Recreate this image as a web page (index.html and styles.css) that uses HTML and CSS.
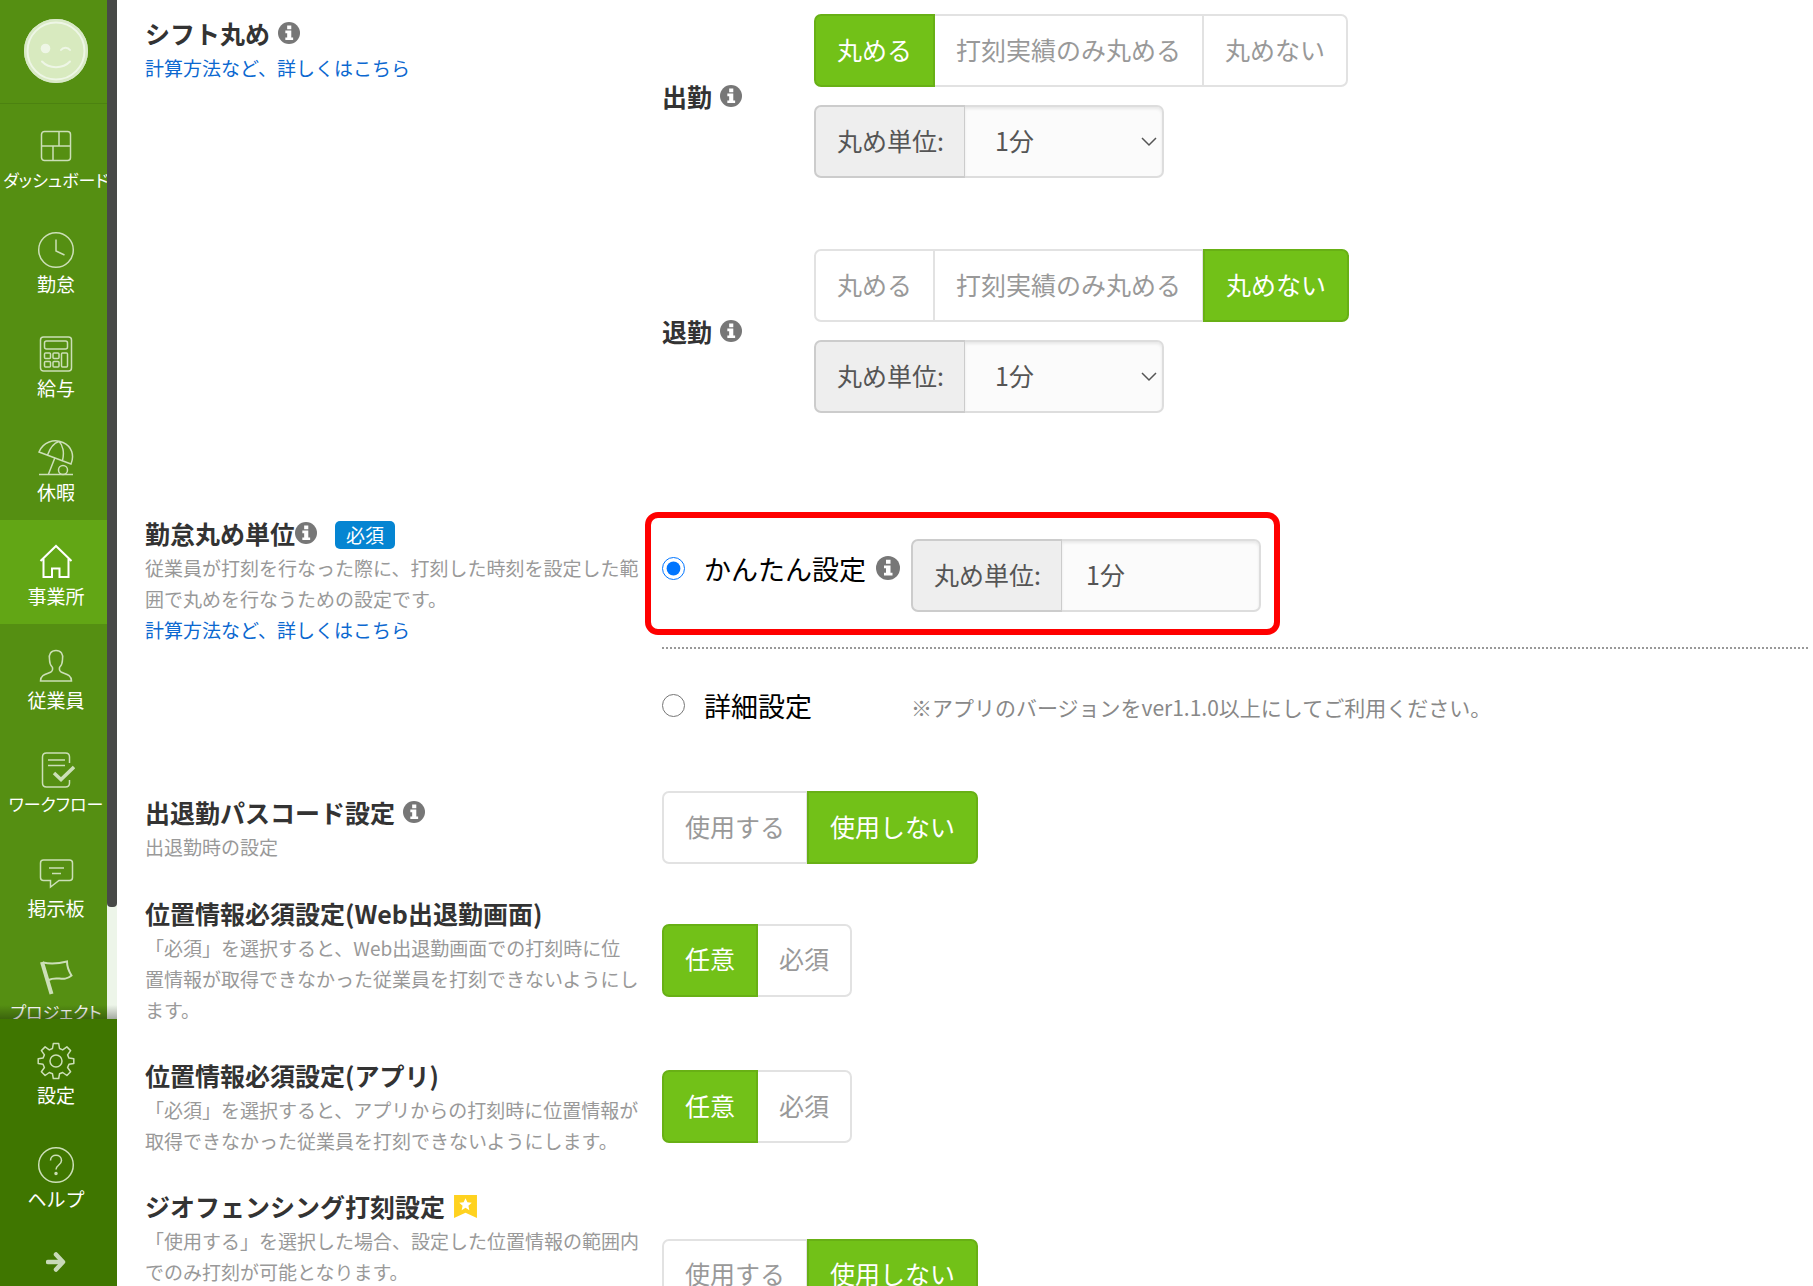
FILE: index.html
```html
<!DOCTYPE html>
<html lang="ja">
<head>
    <meta charset="UTF-8">
    <meta name="viewport" content="width=device-width, initial-scale=1.0">
    <title>事業所設定</title>
    <link rel="stylesheet" href="styles.css">
</head>
<body>
    <!-- shared icons -->
    <svg class="sprite" aria-hidden="true">
        <symbol id="info" viewBox="0 0 24 24">
            <circle cx="12" cy="12" r="12" fill="#777"/>
            <path d="M10 3.8h4.500v4H10zM8 9.400h6.500v7.400h2v2.800H8v-2.800h2v-4.600H8z" fill="#fff"/>
        </symbol>
    </svg>

    <div class="layout">
        <aside class="sidebar">
            <div class="nav-scroll">
                <nav class="nav">
                    <a href="#" class="avatar" aria-label="プロフィール">
                        <svg viewBox="0 0 66 66" width="66" height="66" fill="none" stroke="#eef6e6" stroke-linecap="round">
                            <circle cx="33" cy="33" r="32" fill="#d8eabf" stroke="none"/>
                            <circle cx="33" cy="33" r="31" stroke="#d9e9c8" stroke-width="2"/>
                            <circle cx="33" cy="33" r="28.5" stroke-width="2"/>
                            <circle cx="22.5" cy="30.5" r="4.8" fill="#eef6e6" stroke="none"/>
                            <path d="M38 32c2-3 7-3 9 0M19 43.5c7 7.5 21 7.5 28 0" stroke-width="2"/>
                        </svg>
                    </a>
                    <a href="#" class="nav-item">
                        <svg class="nav-icon" viewBox="0 0 38 38">
                            <rect x="4.5" y="4.5" width="29" height="29" rx="3"/>
                            <path d="M4.5 19h29M22 4.5V19M16 19v14.5"/>
                        </svg>
                        <span class="nav-label kana">ダッシュボード</span>
                    </a>
                    <a href="#" class="nav-item">
                        <svg class="nav-icon" viewBox="0 0 38 38">
                            <circle cx="19" cy="19" r="17.3"/>
                            <path d="M19 8.5V20l8.5 4"/>
                        </svg>
                        <span class="nav-label">勤怠</span>
                    </a>
                    <a href="#" class="nav-item">
                        <svg class="nav-icon" viewBox="0 0 38 38">
                            <rect x="3.5" y="2" width="31" height="34" rx="3"/>
                            <rect x="7.5" y="6" width="23" height="8" rx="2"/>
                            <rect x="7.5" y="18" width="6" height="5.5" rx="1"/>
                            <rect x="16" y="18" width="6" height="5.5" rx="1"/>
                            <rect x="7.5" y="26.5" width="6" height="5.5" rx="1"/>
                            <rect x="16" y="26.5" width="6" height="5.5" rx="1"/>
                            <rect x="24.5" y="18" width="6" height="14" rx="1"/>
                        </svg>
                        <span class="nav-label">給与</span>
                    </a>
                    <a href="#" class="nav-item">
                        <svg class="nav-icon" viewBox="0 0 38 38">
                            <path d="M2 13C6 3 17-.5 26 3.500c9 4 11.5 13 8 21.500zM10.500 16C13 9 17 4 22 2.500c4 3.500 5.500 11 3.500 19M18 18.500 11.500 35M2 35.500h34"/>
                            <circle cx="26" cy="31" r="4.5"/>
                        </svg>
                        <span class="nav-label">休暇</span>
                    </a>
                    <a href="#" class="nav-item active" aria-current="page">
                        <svg class="nav-icon" viewBox="0 0 38 38">
                            <path d="M3.500 18 19 3l15.500 15M6.500 15.500v18.500h8.500v-8.500h7.500V34h9V15.500"/>
                        </svg>
                        <span class="nav-label">事業所</span>
                    </a>
                    <a href="#" class="nav-item">
                        <svg class="nav-icon" viewBox="0 0 38 38">
                            <path d="M19 3.500c-5 0-7.500 3.500-6.500 9 0 4 1 6 3 8 .5 2.500 0 3.500-1.500 4.500-4 2-10.500 2.500-10.500 9h31c0-6.500-6.500-7-10.500-9-1.500-1-2-2-1.500-4.500 2-2 3-4 3-8 1-5.500-1.500-9-6.500-9z"/>
                        </svg>
                        <span class="nav-label">従業員</span>
                    </a>
                    <a href="#" class="nav-item">
                        <svg class="nav-icon" viewBox="0 0 38 38">
                            <path d="M32.500 12V6q0-4-4-4h-19q-4 0-4 4v26q0 4 4 4h19q4 0 4-4v-3M11 9h17M11 14.500h17"/>
                            <path d="m17 22 7 6.500L37 16" stroke-width="3.5"/>
                        </svg>
                        <span class="nav-label kana">ワークフロー</span>
                    </a>
                    <a href="#" class="nav-item">
                        <svg class="nav-icon" viewBox="0 0 38 38">
                            <path d="M6.500 5h26q3 0 3 3v14.500q0 3-3 3H22l-8.500 6.500v-6.500h-7q-3 0-3-3V8q0-3 3-3zM12 13h15M15 18.500h9"/>
                        </svg>
                        <span class="nav-label">掲示板</span>
                    </a>
                    <a href="#" class="nav-item">
                        <svg class="nav-icon" viewBox="0 0 38 38">
                            <path d="m5 3 9.500 32" stroke-width="4"/>
                            <path d="M6 3.500c9 2 16 1 24-1 0 5 2 10 4.500 14-8 7-14 0-23 4.500" stroke-width="2"/>
                        </svg>
                        <span class="nav-label kana">プロジェクト</span>
                    </a>
                </nav>
                <div class="track"><div class="thumb"></div></div>
            </div>
            <div class="nav-bottom">
                <a href="#" class="nav-item">
                    <svg class="nav-icon" viewBox="0 0 38 38">
                        <circle cx="19" cy="19" r="6"/>
                        <path d="M16.3 1.500h5.400l.8 5 3.200 1.400 4.200-3 3.700 3.700-3 4.300 1.400 3.200 4.800.7v4.600l-4.800.8-1.400 3.300 3 4.200-3.700 3.800-4.200-3-3.200 1.300-.8 4.700h-5.400l-.8-4.700-3.200-1.300-4.200 3-3.700-3.800 3-4.200L6 22.200l-4.800-.8v-4.600l4.800-.7 1.400-3.200-3-4.300L8.100 4.900l4.200 3 3.200-1.400z" stroke-linejoin="round"/>
                    </svg>
                    <span class="nav-label">設定</span>
                </a>
                <a href="#" class="nav-item">
                    <svg class="nav-icon" viewBox="0 0 38 38">
                        <circle cx="19" cy="19" r="17.3"/>
                        <path d="M13.500 14.500c0-7 11-7 11 0 0 4.500-5.500 4.500-5.500 9"/>
                        <circle cx="19" cy="27.5" r="1" class="dot"/>
                    </svg>
                    <span class="nav-label">ヘルプ</span>
                </a>
                <button type="button" class="nav-toggle" aria-label="メニューを開く">
                    <svg viewBox="0 0 20 20" width="20" height="20" fill="none" stroke="#c8d9b8" stroke-width="4.5">
                        <path d="M2 10h14" stroke-linecap="round"/>
                        <path d="m10 2.500 7 7.500-7 7.500" stroke-linecap="round" stroke-linejoin="round"/>
                    </svg>
                </button>
            </div>
        </aside>

        <main class="content">
            <section class="row">
                <div class="row-text">
                    <h2>シフト丸め <svg class="info"><use href="#info"/></svg></h2>
                    <a href="#">計算方法など、詳しくはこちら</a>
                </div>
                <div>
                    <div class="shift">
                        <h3>出勤 <svg class="info"><use href="#info"/></svg></h3>
                        <div class="shift-controls">
                            <div class="btn-group">
                                <button type="button" class="btn active">丸める</button>
                                <button type="button" class="btn">打刻実績のみ丸める</button>
                                <button type="button" class="btn">丸めない</button>
                            </div>
                            <div class="input-group">
                                <label for="inUnit">丸め単位:</label>
                                <div class="select-wrap">
                                    <select id="inUnit"><option>1分</option></select>
                                    <svg class="chevron" viewBox="0 0 16 10"><path d="m1 1 7 7 7-7"/></svg>
                                </div>
                            </div>
                        </div>
                    </div>
                    <div class="shift">
                        <h3>退勤 <svg class="info"><use href="#info"/></svg></h3>
                        <div class="shift-controls">
                            <div class="btn-group">
                                <button type="button" class="btn">丸める</button>
                                <button type="button" class="btn">打刻実績のみ丸める</button>
                                <button type="button" class="btn active">丸めない</button>
                            </div>
                            <div class="input-group">
                                <label for="outUnit">丸め単位:</label>
                                <div class="select-wrap">
                                    <select id="outUnit"><option>1分</option></select>
                                    <svg class="chevron" viewBox="0 0 16 10"><path d="m1 1 7 7 7-7"/></svg>
                                </div>
                            </div>
                        </div>
                    </div>
                </div>
            </section>

            <section class="row">
                <div class="row-text">
                    <h2 class="tight">勤怠丸め単位<svg class="info"><use href="#info"/></svg><span class="badge">必須</span></h2>
                    <p>従業員が打刻を行なった際に、打刻した時刻を設定した範囲で丸めを行なうための設定です。</p>
                    <a href="#">計算方法など、詳しくはこちら</a>
                </div>
                <div>
                    <div class="option option-simple">
                        <div class="option-name">
                            <input type="radio" name="roundMode" id="modeSimple" checked>
                            <label for="modeSimple">かんたん設定</label>
                            <svg class="info"><use href="#info"/></svg>
                        </div>
                        <div class="input-group">
                            <label for="unit">丸め単位:</label>
                            <input type="text" id="unit" value="1分">
                        </div>
                    </div>
                    <div class="option option-detail">
                        <div class="option-name">
                            <input type="radio" name="roundMode" id="modeDetail">
                            <label for="modeDetail">詳細設定</label>
                        </div>
                        <p class="note">※アプリのバージョンをver1.1.0以上にしてご利用ください。</p>
                    </div>
                </div>
            </section>

            <section class="row middle">
                <div class="row-text">
                    <h2>出退勤パスコード設定 <svg class="info"><use href="#info"/></svg></h2>
                    <p>出退勤時の設定</p>
                </div>
                <div class="btn-group">
                    <button type="button" class="btn">使用する</button>
                    <button type="button" class="btn active">使用しない</button>
                </div>
            </section>

            <section class="row middle">
                <div class="row-text">
                    <h2>位置情報必須設定(Web出退勤画面)</h2>
                    <p>「必須」を選択すると、Web出退勤画面での打刻時に位置情報が取得できなかった従業員を打刻できないようにします。</p>
                </div>
                <div class="btn-group">
                    <button type="button" class="btn active">任意</button>
                    <button type="button" class="btn">必須</button>
                </div>
            </section>

            <section class="row middle">
                <div class="row-text">
                    <h2>位置情報必須設定(アプリ)</h2>
                    <p>「必須」を選択すると、アプリからの打刻時に位置情報が取得できなかった従業員を打刻できないようにします。</p>
                </div>
                <div class="btn-group">
                    <button type="button" class="btn active">任意</button>
                    <button type="button" class="btn">必須</button>
                </div>
            </section>

            <section class="row middle geofence">
                <div class="row-text">
                    <h2>ジオフェンシング打刻設定
                        <svg class="bookmark" viewBox="0 0 24 24">
                            <path d="M1 1h22v22l-11-5-11 5z" fill="#ffd21f"/>
                            <path d="m12 4 1.800 4 4.200.4-3.200 2.900.9 4.200-3.700-2.200-3.700 2.200.9-4.200L6 8.400l4.200-.4z" fill="#fff"/>
                        </svg>
                    </h2>
                    <p>「使用する」を選択した場合、設定した位置情報の範囲内でのみ打刻が可能となります。</p>
                </div>
                <div class="btn-group">
                    <button type="button" class="btn">使用する</button>
                    <button type="button" class="btn active">使用しない</button>
                </div>
            </section>
        </main>
    </div>

    <script>
        document.querySelectorAll('.btn-group').forEach((group) => {
            group.addEventListener('click', (e) => {
                if (!e.target.classList.contains('btn')) return;
                group.querySelectorAll('.btn').forEach((btn) => btn.classList.remove('active'));
                e.target.classList.add('active');
            });
        });
    </script>
</body>
</html>
```
FILE: styles.css
```css
*,
*::after {
    box-sizing: border-box;
}

body {
    margin: 0;
    font-family: "Noto Sans CJK JP", sans-serif;
    font-size: 19px;
    color: #333;
    background-color: #fff;
}

h2, h3, p {
    margin: 0;
}

a {
    color: #0b68d0;
    text-decoration: none;
}

button, input, select {
    font-family: inherit;
}

.sprite {
    display: none;
}

.layout {
    display: flex;
    height: 100vh;
    overflow: hidden;
}

/* sidebar */
.sidebar {
    display: flex;
    flex-direction: column;
    flex: none;
    width: 117px;
    background-color: #558f12;
}

.nav-scroll {
    position: relative;
    display: flex;
    flex: 1;
    min-height: 0;
    overflow: hidden;
}

.nav-scroll::after {
    content: "";
    position: absolute;
    left: 0;
    right: 0;
    bottom: 0;
    height: 14px;
    background: linear-gradient(rgba(0, 0, 0, 0), rgba(0, 0, 0, 0.3));
}

.nav {
    flex: 1;
    min-width: 0;
    overflow: hidden;
}

.track {
    flex: none;
    width: 10px;
    background-color: #edf5e9;
}

.thumb {
    height: 89%;
    background-color: #474947;
    border-radius: 0 0 4px 4px;
}

.avatar {
    display: flex;
    justify-content: center;
    width: 112px;
    height: 104px;
    padding-top: 18px;
    border-bottom: 1px solid #4c8210;
}

.nav-item {
    display: flex;
    flex-direction: column;
    align-items: center;
    width: 112px;
    height: 104px;
    padding-top: 23px;
    color: #fff;
}

.nav-item.active {
    background-color: #62a615;
}

.nav-icon {
    flex: none;
    width: 38px;
    height: 38px;
    fill: none;
    stroke: #ccdfb7;
    stroke-width: 1.5;
}

.nav-icon .dot {
    fill: #ccdfb7;
}

.active .nav-icon {
    stroke: #fff;
    stroke-width: 2;
}

.nav-label {
    line-height: 30px;
    white-space: nowrap;
}

.nav-label.kana {
    font-size: 17px;
    font-feature-settings: "palt";
}

.nav-bottom {
    flex: none;
    background-color: #3f7600;
}

.nav-toggle {
    display: flex;
    justify-content: center;
    align-items: center;
    width: 112px;
    height: 59px;
    padding: 10px 0 0;
    border: none;
    background: none;
    cursor: pointer;
}

/* settings */
.content {
    flex: 1;
    min-width: 0;
    padding: 0 5px 0 28px;
    overflow: hidden;
}

.row {
    display: grid;
    grid-template-columns: 494px 1fr;
    column-gap: 23px;
    padding: 14px 0 16px;
}

.row.middle {
    align-items: center;
}

.geofence {
    min-height: 206px;
}

.geofence .row-text {
    align-self: start;
}

.row-text {
    padding-bottom: 1px;
    line-height: 31px;
    color: #999;
}

h2, h3 {
    display: flex;
    align-items: center;
    gap: 8px;
    font-size: 25px;
    line-height: 38px;
    font-weight: bold;
    color: #333;
}

h2.tight {
    gap: 0;
}

.info {
    flex: none;
    width: 22px;
    height: 22px;
}

.bookmark {
    width: 25px;
    height: 25px;
}

.badge {
    margin: 4px 0 0 18px;
    padding: 0 11px;
    border-radius: 5px;
    background-color: #0585d2;
    color: #fff;
    font-size: 19px;
    font-weight: normal;
    line-height: 28px;
}

.shift {
    display: grid;
    grid-template-columns: 152px 1fr;
    align-items: center;
    margin-bottom: 71px;
}

.shift-controls {
    display: flex;
    flex-direction: column;
    align-items: flex-start;
    gap: 18px;
}

.btn-group {
    display: flex;
}

.btn {
    height: 73px;
    padding: 0 21px 4px;
    border: 2px solid #e2e2e2;
    background-color: #fff;
    color: #999;
    font-size: 25px;
    white-space: nowrap;
    cursor: pointer;
}

.btn + .btn {
    margin-left: -1px;
}

.btn:first-child {
    border-radius: 7px 0 0 7px;
}

.btn:last-child {
    border-radius: 0 7px 7px 0;
}

.btn + .btn:not(.active) {
    border-left-width: 1px;
}

.btn.active {
    position: relative;
    background-color: #72c118;
    border-color: #68b015;
    color: #fff;
}

.input-group {
    display: flex;
    height: 73px;
    font-size: 25px;
    color: #555;
}

.input-group label {
    display: flex;
    align-items: center;
    width: 151px;
    padding: 0 0 4px 21px;
    border: 2px solid #ccc;
    border-right-width: 1px;
    border-radius: 7px 0 0 7px;
    background-color: #eee;
}

.input-group select,
.input-group input {
    width: 199px;
    height: 73px;
    padding: 0 24px 4px;
    border: 2px solid #ddd;
    border-left: none;
    border-radius: 0 7px 7px 0;
    background-color: #fbfbfb;
    box-shadow: inset 0 2px 3px rgba(0, 0, 0, 0.08);
    color: #555;
    font-size: 25px;
    appearance: none;
}

.input-group select {
    padding-left: 30px;
}

.select-wrap {
    position: relative;
}

.chevron {
    position: absolute;
    right: 7px;
    top: 32px;
    width: 16px;
    height: 10px;
    fill: none;
    stroke: #555;
    stroke-width: 1.5;
    pointer-events: none;
}

.option {
    display: flex;
    align-items: flex-start;
}

.option-simple {
    position: relative;
    padding: 25px 0 35px;
    border-bottom: 2px dotted #999;
}

/* highlight frame round the simple option */
.option-simple::after {
    content: "";
    position: absolute;
    left: -17px;
    top: -2px;
    width: 635px;
    height: 123px;
    border: 6px solid #f00;
    border-radius: 13px;
    pointer-events: none;
}

.option-detail {
    padding: 27px 0 23px;
}

.option-name {
    display: flex;
    align-items: center;
    width: 249px;
    height: 58px;
    font-size: 27px;
    color: #000;
}

.option-name input {
    width: 23px;
    height: 23px;
    margin: 0 19px 0 0;
    accent-color: #0075ff;
}

.option-name .info {
    width: 24px;
    height: 24px;
    margin-left: 10px;
}

.note {
    font-size: 21px;
    line-height: 62px;
    color: #888;
}
```
